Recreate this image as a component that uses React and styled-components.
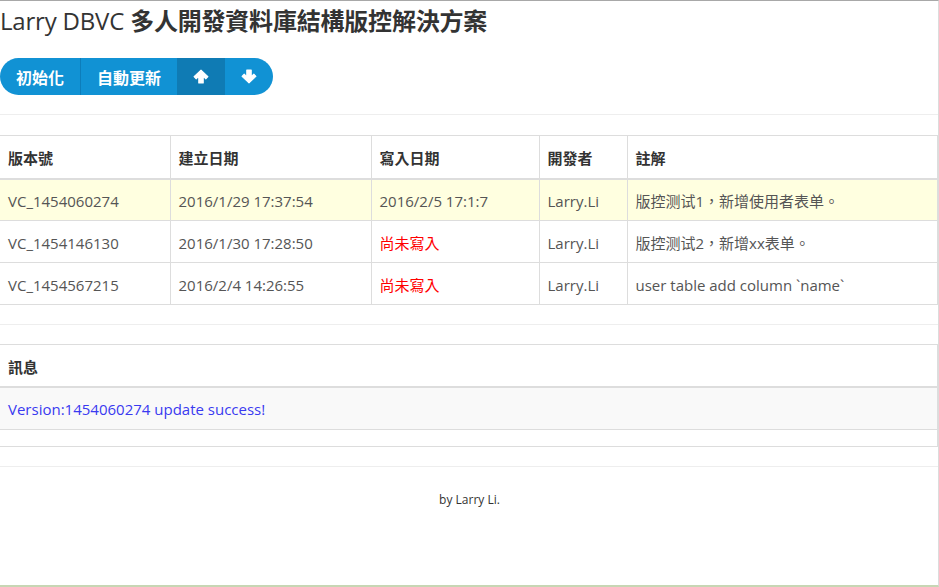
import React from "react";
import styled, { createGlobalStyle } from "styled-components";

const GlobalStyle = createGlobalStyle`
  html, body { margin: 0; padding: 0; background: #fff; }
  body {
    font-family: "Open Sans", "Noto Sans CJK TC", sans-serif;
    color: #333;
    font-size: 15px;
  }
  * { box-sizing: border-box; }
`;

const Page = styled.div`
  width: 939px;
  height: 587px;
  border-top: 1px solid #a8a8a8;
  border-right: 1px solid #dcdcdc;
  border-bottom: 2px solid #c7d6b4;
  overflow: hidden;
  display: flex;
  flex-direction: column;
`;

const Title = styled.h1`
  margin: 6px 0 0;
  font-size: 24px;
  line-height: 28px;
  font-weight: 400;
  color: #333;
  letter-spacing: -0.2px;
`;

const Cjk = styled.span`
  font-weight: 700;
`;

const Toolbar = styled.div`
  margin-top: 23px;
  display: flex;
`;

const BtnGroup = styled.div`
  display: inline-flex;
  border-radius: 19px;
  overflow: hidden;
`;

const Btn = styled.button`
  border: 0;
  margin: 0;
  height: 37px;
  padding: 0 ${(p) => (p.$icon ? "16px" : "16px")};
  width: ${(p) => (p.$icon ? "48px" : "auto")};
  background: ${(p) => (p.$active ? "#0f7bb4" : "#1192d4")};
  color: #fff;
  font-family: "Open Sans", "Noto Sans CJK TC", sans-serif;
  font-size: 16px;
  font-weight: 700;
  display: flex;
  align-items: center;
  justify-content: center;
  border-left: ${(p) => (p.$divider ? "1px solid #0d7dba" : "0")};
  cursor: pointer;
`;

const Rule = styled.hr`
  border: 0;
  border-top: 1px solid #eee;
  margin: ${(p) => p.$m || "19px 0"};
  width: 100%;
`;

const Table = styled.table`
  width: 938px;
  border-collapse: collapse;
  table-layout: fixed;
  border-top: 1px solid #ddd;
  border-bottom: 1px solid #ddd;
  border-right: 1px solid #ddd;
`;

const Th = styled.th`
  text-align: left;
  font-weight: 700;
  color: #333;
  font-size: 15px;
  height: ${(p) => p.$h || 43}px;
  padding: 2px 8px 0;
  border-bottom: 2px solid #ddd;
  border-left: ${(p) => (p.$first ? "0" : "1px solid #ddd")};
`;

const Row = styled.tr`
  background: ${(p) => p.$bg || "#fff"};
`;

const Td = styled.td`
  height: ${(p) => p.$h || 42}px;
  padding: 2px 8px 0;
  color: ${(p) => p.$color || "#555"};
  font-size: 15px;
  border-top: 1px solid #ddd;
  border-left: ${(p) => (p.$first ? "0" : "1px solid #ddd")};
  white-space: nowrap;
`;

const Spacer = styled.td`
  height: 17px;
  padding: 0;
  border-top: 1px solid #ddd;
`;

const Footer = styled.div`
  text-align: center;
  font-size: 12px;
  color: #333;
  margin-top: 5px;
  padding-left: 1px;
`;

const Arrow = ({ down }) => (
  <svg width="16" height="15" viewBox="0 0 15 14" style={{ transform: down ? "rotate(180deg)" : "none" }}>
    <path
      d="M7.5 1 L14 7.2 L12 9.2 L9.6 6.9 V13 H5.4 V6.9 L3 9.2 L1 7.2 Z"
      fill="#fff"
      strokeLinejoin="round"
      stroke="#fff"
      strokeWidth="1"
    />
  </svg>
);

const rows = [
  { v: "VC_1454060274", c: "2016/1/29 17:37:54", w: "2016/2/5 17:1:7", d: "Larry.Li", n: "版控测试1，新增使用者表单。", bg: "#ffffe0" },
  { v: "VC_1454146130", c: "2016/1/30 17:28:50", w: null, d: "Larry.Li", n: "版控测试2，新增xx表单。" },
  { v: "VC_1454567215", c: "2016/2/4 14:26:55", w: null, d: "Larry.Li", n: "user table add column `name`" },
];

export default function App() {
  return (
    <Page>
      <GlobalStyle />
      <Title>
        Larry DBVC <Cjk>多人開發資料庫結構版控解決方案</Cjk>
      </Title>
      <Toolbar>
        <BtnGroup>
          <Btn>初始化</Btn>
          <Btn $divider>自動更新</Btn>
          <Btn $icon $active aria-label="up">
            <Arrow />
          </Btn>
          <Btn $icon aria-label="down">
            <Arrow down />
          </Btn>
        </BtnGroup>
      </Toolbar>
      <Rule $m="19px 0 20px" />
      <Table>
        <colgroup>
          <col style={{ width: 170 }} />
          <col style={{ width: 201 }} />
          <col style={{ width: 168 }} />
          <col style={{ width: 88 }} />
          <col />
        </colgroup>
        <thead>
          <tr>
            <Th $first>版本號</Th>
            <Th>建立日期</Th>
            <Th>寫入日期</Th>
            <Th>開發者</Th>
            <Th>註解</Th>
          </tr>
        </thead>
        <tbody>
          {rows.map((r, i) => (
            <Row key={r.v} $bg={r.bg}>
              <Td $first $h={i === 2 ? 41 : 42}>{r.v}</Td>
              <Td $h={i === 2 ? 41 : 42}>{r.c}</Td>
              {r.w ? <Td>{r.w}</Td> : <Td $color="#ff0000">尚未寫入</Td>}
              <Td>{r.d}</Td>
              <Td>{r.n}</Td>
            </Row>
          ))}
        </tbody>
      </Table>
      <Rule />
      <Table>
        <thead>
          <tr>
            <Th $first $h={42}>訊息</Th>
          </tr>
        </thead>
        <tbody>
          <Row $bg="#f9f9f9">
            <Td $first $h={43} $color="#3a3af0">Version:1454060274 update success!</Td>
          </Row>
          <tr>
            <Spacer />
          </tr>
        </tbody>
      </Table>
      <Rule />
      <Footer>by Larry Li.</Footer>
    </Page>
  );
}
